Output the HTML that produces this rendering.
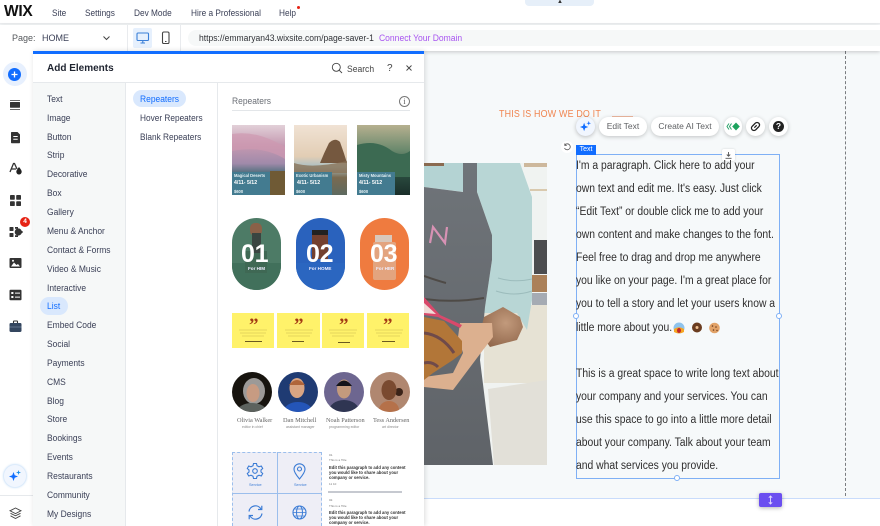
<!DOCTYPE html>
<html><head><meta charset="utf-8">
<style>
*{box-sizing:border-box}
html,body{margin:0;padding:0}
body{width:880px;height:526px;overflow:hidden;background:#fff;font-family:"Liberation Sans",sans-serif;color:#3b4057;position:relative}
#r{position:absolute;left:0;top:0;width:880px;height:526px;overflow:hidden;filter:blur(.35px)}
.a{position:absolute;white-space:nowrap}
.m{font-size:9px;color:#3b4057;top:7.5px;transform:scaleX(.92);transform-origin:0 0}
.c{left:47px;font-size:9px;color:#3b4057;transform:scaleX(.94);transform-origin:0 0}
.p{left:576px;font-size:11.5px;line-height:13px;color:#2f2e2e;transform:scaleX(.9);transform-origin:0 0}
.pill{background:#fff;border-radius:12px;height:19px;box-shadow:0 1px 4px rgba(0,0,0,.22);font-size:8.5px;color:#5f6164;text-align:center;line-height:19px;top:117px}
.t1{font-size:4.1px;font-weight:bold;color:#e6f1f4}
.t2{font-size:5.2px;font-weight:bold;color:#fff}
.num{font-size:25px;font-weight:bold;color:#fff;line-height:30px;letter-spacing:-.3px;top:239px}
.for{font-size:4.6px;font-weight:bold;color:#eef;top:265.5px}
.nm{font-family:"Liberation Serif",serif;font-size:6.3px;color:#666;top:417px}
.rl{font-size:3.5px;color:#888;top:424.5px}
.q{font-family:"Liberation Serif",serif;font-weight:bold;font-size:19px;color:#a43b14;line-height:20px;top:316px}
</style></head><body><div id="r">
<!-- canvas -->
<div class="a" style="left:0;top:0;width:880px;height:499px;background:#f6f9fa"></div>
<div class="a" style="left:0;top:498px;width:880px;height:1px;background:#c9dcfb"></div>
<div class="a" style="left:0;top:499px;width:880px;height:27px;background:#fff"></div>
<div class="a" style="left:845px;top:51px;height:445px;border-left:1px dashed #7a7d80"></div>

<!-- top bars -->
<div class="a" style="left:0;top:0;width:880px;height:24px;background:#fff;border-bottom:1px solid #eceef0"></div>
<div class="a" style="left:525px;top:0;width:69px;height:6px;background:#e6eff9;border-radius:0 0 4px 4px"></div>
<div class="a" style="left:557px;top:0;font-size:6px;color:#333;line-height:4px">▲</div>
<div class="a" style="left:4px;top:3px;font-size:15.500px;font-weight:bold;color:#111;letter-spacing:-.3px;line-height:18px">WIX</div>
<div class="a m" style="left:52px">Site</div>
<div class="a m" style="left:85px">Settings</div>
<div class="a m" style="left:134px">Dev Mode</div>
<div class="a m" style="left:191px">Hire a Professional</div>
<div class="a m" style="left:279px">Help</div>
<div class="a" style="left:297px;top:6px;width:3px;height:3px;border-radius:50%;background:#e62214"></div>

<div class="a" style="left:0;top:25px;width:880px;height:26px;background:#fff;box-shadow:0 1px 4px rgba(0,0,0,.2)"></div>
<div class="a" style="left:12px;top:33px;font-size:9px;color:#55585c">Page:</div>
<div class="a" style="left:42px;top:33px;font-size:9px;color:#3b4057">HOME</div>
<svg class="a" style="left:102px;top:35px" width="9" height="7" viewBox="0 0 9 7"><path d="M1.5 1.5L4.5 4.5L7.5 1.5" fill="none" stroke="#444" stroke-width="1"/></svg>
<div class="a" style="left:127px;top:25px;width:1px;height:26px;background:#e9ebee"></div>
<div class="a" style="left:180px;top:25px;width:1px;height:26px;background:#e9ebee"></div>
<div class="a" style="left:133px;top:28px;width:19px;height:20px;background:#e6f0fd;border-radius:2px"></div>
<svg class="a" style="left:136px;top:32px" width="14" height="12" viewBox="0 0 14 12"><rect x="1" y="1" width="11.5" height="7.5" rx="1" fill="none" stroke="#3a7fd8" stroke-width="1.1"/><path d="M6.8 8.5V11M4.5 11H9" stroke="#3a7fd8" stroke-width="1.1"/></svg>
<svg class="a" style="left:161px;top:31px" width="10" height="14" viewBox="0 0 10 14"><rect x="1.5" y="1" width="6.5" height="11.5" rx="1.3" fill="none" stroke="#444" stroke-width="1.1"/><path d="M4 10.5H5.5" stroke="#444"/></svg>
<div class="a" style="left:188px;top:30px;width:692px;height:16px;background:#f6f8f8;border-radius:8px 0 0 8px"></div>
<div class="a" style="left:199px;top:33px;font-size:9px;color:#303237;transform:scaleX(.95);transform-origin:0 0">https://emmaryan43.wixsite.com/page-saver-1</div>
<div class="a" style="left:379px;top:33px;font-size:9px;color:#a855f0;transform:scaleX(.95);transform-origin:0 0">Connect Your Domain</div>

<!-- left rail -->
<div class="a" style="left:0;top:51px;width:33px;height:475px;background:#fff"></div>
<div class="a" style="left:3px;top:62px;width:24px;height:24px;border-radius:50%;background:#e7f0fe"></div>
<div class="a" style="left:8px;top:68px;width:13px;height:13px;border-radius:50%;background:#116dff"></div>
<svg class="a" style="left:8px;top:68px" width="13" height="13"><path d="M6.5 3.5V9.5M3.5 6.5H9.5" stroke="#fff" stroke-width="1.3"/></svg>
<svg class="a" style="left:9px;top:99px" width="12" height="12" viewBox="0 0 12 12"><path d="M1 1H11V1.8H1ZM1 10H11V10.8H1Z" fill="#333"/><rect x="1" y="3" width="10" height="5.8" rx=".5" fill="#333"/></svg>
<svg class="a" style="left:10px;top:131px" width="11" height="13" viewBox="0 0 11 13"><path d="M1.5 1H7.5L10 3.5V11.5Q10 12.3 9 12.3H2Q1 12.3 1 11.5V1.8Q1 1 1.5 1Z" fill="#333"/><path d="M3.3 5.5H7.7M3.3 8.3H7.7" stroke="#fff" stroke-width="1"/></svg>
<svg class="a" style="left:9px;top:162px" width="14" height="13" viewBox="0 0 14 13"><path d="M1 10L4.5 1.5H5.5L8 7M2.5 7H7" fill="none" stroke="#333" stroke-width="1.3"/><path d="M10 5Q13 8.5 12.7 10Q12.2 12.5 10 12.5Q7.8 12.5 7.3 10Q7 8.5 10 5Z" fill="#222"/></svg>
<svg class="a" style="left:9px;top:194px" width="13" height="13" viewBox="0 0 13 13"><g fill="#333"><rect x="1" y="1" width="4.800" height="4.800" rx=".8"/><rect x="7.200" y="1" width="4.800" height="4.800" rx=".8"/><rect x="1" y="7.200" width="4.800" height="4.800" rx=".8"/><rect x="7.200" y="7.200" width="4.800" height="4.800" rx=".8"/></g></svg>
<svg class="a" style="left:9px;top:226px" width="14" height="12" viewBox="0 0 14 12"><g fill="#333"><rect x="0.5" y="1" width="4" height="4" rx=".6"/><rect x="0.5" y="7" width="4" height="4" rx=".6"/><rect x="6" y="1" width="3" height="1.8"/><rect x="6" y="9.2" width="3" height="1.8"/><circle cx="9.3" cy="6" r="3.6"/><rect x="11" y="5" width="2.6" height="2"/></g></svg>
<div class="a" style="left:20px;top:217px;width:10px;height:10px;border-radius:50%;background:#e62214;color:#fff;font-size:6.5px;font-weight:bold;text-align:center;line-height:10px">4</div>
<svg class="a" style="left:9px;top:257px" width="13" height="12" viewBox="0 0 13 12"><rect x=".5" y="1" width="12" height="10" rx="1" fill="#333"/><path d="M2 9.5L5 5.5L7.5 8L9 7L11 9.5Z" fill="#fff"/><circle cx="4" cy="3.7" r="1" fill="#fff"/></svg>
<svg class="a" style="left:9px;top:289px" width="13" height="12" viewBox="0 0 13 12"><rect x=".5" y=".8" width="12" height="10.5" rx="1" fill="#333"/><path d="M2.3 3H4.4V5H2.3ZM2.3 7H4.4V9H2.3ZM6 3.6H11V4.6H6ZM6 7.6H11V8.6H6Z" fill="#fff"/></svg>
<svg class="a" style="left:9px;top:320px" width="13" height="13" viewBox="0 0 13 13"><path d="M4.5 3V1.5Q4.5 1 5 1H8Q8.5 1 8.5 1.5V3" fill="none" stroke="#333" stroke-width="1.1"/><rect x=".5" y="3" width="12" height="9" rx="1.2" fill="#34465f"/><path d="M.5 7H12.5" stroke="#7f8fa8" stroke-width=".6"/></svg>
<div class="a" style="left:3px;top:464px;width:24px;height:24px;border-radius:50%;background:#f1f6fe;box-shadow:inset 0 0 0 1px #dcebfb,0 0 2px #d8e8f8"></div>
<svg class="a" style="left:8px;top:469px" width="14" height="14" viewBox="0 0 14 14"><path d="M5.5 3L6.7 6.3L10 7.5L6.7 8.7L5.5 12L4.3 8.7L1 7.5L4.3 6.3Z" fill="#116dff"/><path d="M10.5 1L11.1 2.9L13 3.5L11.1 4.1L10.5 6L9.9 4.1L8 3.5L9.9 2.9Z" fill="#1a8ee8"/></svg>
<div class="a" style="left:0;top:495px;width:33px;height:1px;background:#e6e9ec"></div>
<svg class="a" style="left:9px;top:507px" width="13" height="13" viewBox="0 0 13 13"><path d="M6.5 1L12 3.8L6.5 6.6L1 3.8Z M1.5 6.3L6.5 8.8L11.5 6.3 M1.5 8.8L6.5 11.5L11.5 8.8" fill="none" stroke="#444" stroke-width=".9"/></svg>

<!-- panel -->
<div class="a" style="left:33px;top:51px;width:391px;height:475px;background:#fff;box-shadow:1px 0 5px rgba(0,0,0,.14)"></div>
<div class="a" style="left:33px;top:51px;width:391px;height:3px;background:#116dff"></div>
<div class="a" style="left:33px;top:82px;width:391px;height:1px;background:#e6e9ec"></div>
<div class="a" style="left:33px;top:83px;width:93px;height:443px;background:#f6f8f8;border-right:1px solid #e6e9ec"></div>
<div class="a" style="left:217px;top:83px;width:1px;height:443px;background:#e6e9ec"></div>
<div class="a" style="left:47px;top:63px;font-size:10px;font-weight:bold;color:#1f2430">Add Elements</div>
<svg class="a" style="left:331px;top:62px" width="12" height="12" viewBox="0 0 12 12"><circle cx="5.3" cy="5.3" r="4" fill="none" stroke="#444" stroke-width=".9"/><path d="M8.2 8.2L11 11" stroke="#444" stroke-width=".9"/></svg>
<div class="a" style="left:347px;top:63.500px;font-size:9px;color:#444;transform:scaleX(.95);transform-origin:0 0">Search</div>
<div class="a" style="left:387px;top:62.500px;font-size:10px;color:#444">?</div>
<svg class="a" style="left:405px;top:64px" width="8" height="8"><path d="M1.500 1.500L6.500 6.500M6.500 1.500L1.500 6.500" stroke="#444" stroke-width=".9"/></svg>

<div class="a c" style="top:93.500px">Text</div>
<div class="a c" style="top:112.500px">Image</div>
<div class="a c" style="top:131.500px">Button</div>
<div class="a c" style="top:150px">Strip</div>
<div class="a c" style="top:169px">Decorative</div>
<div class="a c" style="top:188px">Box</div>
<div class="a c" style="top:207px">Gallery</div>
<div class="a c" style="top:226px">Menu &amp; Anchor</div>
<div class="a c" style="top:244.500px">Contact &amp; Forms</div>
<div class="a c" style="top:263.500px">Video &amp; Music</div>
<div class="a c" style="top:282.500px">Interactive</div>
<div class="a" style="left:40px;top:297px;width:28px;height:18px;border-radius:9px;background:#d9e8fd"></div>
<div class="a c" style="top:301px;color:#116dff">List</div>
<div class="a c" style="top:320px">Embed Code</div>
<div class="a c" style="top:339px">Social</div>
<div class="a c" style="top:358px">Payments</div>
<div class="a c" style="top:376.500px">CMS</div>
<div class="a c" style="top:395.500px">Blog</div>
<div class="a c" style="top:414px">Store</div>
<div class="a c" style="top:433px">Bookings</div>
<div class="a c" style="top:452px">Events</div>
<div class="a c" style="top:471px">Restaurants</div>
<div class="a c" style="top:489.500px">Community</div>
<div class="a c" style="top:509px">My Designs</div>

<div class="a" style="left:133px;top:90px;width:53px;height:17px;border-radius:9px;background:#d9e8fd"></div>
<div class="a c" style="left:140px;top:93.500px;color:#116dff">Repeaters</div>
<div class="a c" style="left:140px;top:112.500px;transform:scaleX(.92)">Hover Repeaters</div>
<div class="a c" style="left:140px;top:131.500px;transform:scaleX(.92)">Blank Repeaters</div>

<div class="a c" style="left:232px;top:96px;color:#6b6f76">Repeaters</div>
<div class="a" style="left:232px;top:110px;width:178px;height:1px;background:#e3e6e9"></div>
<div class="a" style="left:399px;top:96px;width:11px;height:11px;border-radius:50%;border:1px solid #777;font-size:8px;line-height:9px;text-align:center;color:#555;font-family:'Liberation Serif',serif">i</div>

<!-- repeater 1 -->
<svg class="a" style="left:232px;top:125px" width="178" height="71" viewBox="0 0 178 71">
<defs>
<linearGradient id="g1" x1="0" y1="0" x2="0" y2="1"><stop offset="0" stop-color="#e2d0d8"/><stop offset=".3" stop-color="#c498b0"/><stop offset=".55" stop-color="#a08aaa"/><stop offset=".68" stop-color="#54707f"/><stop offset="1" stop-color="#5f6650"/></linearGradient>
<linearGradient id="g2" x1="0" y1="0" x2="0" y2="1"><stop offset="0" stop-color="#f0e2d4"/><stop offset=".45" stop-color="#e2cdb4"/><stop offset=".6" stop-color="#a9c0c4"/><stop offset=".75" stop-color="#7a6a50"/><stop offset="1" stop-color="#5d6a60"/></linearGradient>
<linearGradient id="g3" x1="0" y1="0" x2="0" y2="1"><stop offset="0" stop-color="#b6b08f"/><stop offset=".35" stop-color="#6c8a6e"/><stop offset=".65" stop-color="#2e5243"/><stop offset="1" stop-color="#1a2e2a"/></linearGradient>
</defs>
<rect width="53" height="70" fill="url(#g1)"/><path d="M0 9Q25 5 53 22V34Q30 20 0 26Z" fill="#cf98b0" opacity=".7"/><rect x="38" y="46" width="15" height="24" fill="#6f5a35"/><rect y="47" width="38" height="23" fill="#437b90"/>
<rect x="62" width="53" height="70" fill="url(#g2)"/><path d="M88 38Q92 28 97 18Q103 12 108 17Q112 28 115 38Z" fill="#75583f"/><path d="M62 38Q80 44 115 36V48H62Z" fill="#8a7357" opacity=".8"/><rect x="62" y="47" width="38" height="23" fill="#437b90"/>
<rect x="125" width="53" height="70" fill="url(#g3)"/><path d="M125 20Q145 14 160 26Q170 32 178 26V52H125Z" fill="#3c6a52"/><rect x="125" y="47" width="38" height="23" fill="#437b90"/>
</svg>
<div class="a t1" style="left:234px;top:173px">Magical Deserts</div>
<div class="a t2" style="left:234px;top:180px">4/11- 5/12</div>
<div class="a t1" style="left:234px;top:188.500px">$600</div>
<div class="a t1" style="left:296px;top:173px">Exotic Urbanism</div>
<div class="a t2" style="left:297px;top:180px">4/11- 5/12</div>
<div class="a t1" style="left:296px;top:188.500px">$600</div>
<div class="a t1" style="left:359px;top:173px">Misty Mountains</div>
<div class="a t2" style="left:359px;top:180px">4/11- 5/12</div>
<div class="a t1" style="left:359px;top:188.500px">$600</div>

<!-- repeater 2 -->
<svg class="a" style="left:232px;top:218px" width="178" height="73" viewBox="0 0 178 73">
<defs><clipPath id="p1"><rect width="49" height="72" rx="24.500"/></clipPath><clipPath id="p2"><rect x="64" width="49" height="72" rx="24.500"/></clipPath><clipPath id="p3"><rect x="128" width="49" height="72" rx="24.500"/></clipPath></defs>
<g clip-path="url(#p1)"><rect width="49" height="72" fill="#4d7b66"/><rect y="45" width="49" height="27" fill="#41705b"/><rect x="13" y="33" width="22" height="22" fill="#3f6854"/><rect x="18" y="5" width="12" height="13" rx="5" fill="#8a6148"/><rect x="20" y="15" width="9" height="20" fill="#3a4541"/></g>
<g clip-path="url(#p2)"><rect x="64" width="49" height="72" fill="#2a62bd"/><rect x="64" y="45" width="49" height="27" fill="#2b66c0"/><rect x="80" y="12" width="16" height="5" fill="#222"/><rect x="80" y="17" width="16" height="24" fill="#73402f"/></g>
<g clip-path="url(#p3)"><rect x="128" width="49" height="72" fill="#ef7b3f"/><rect x="143" y="17" width="17" height="7" fill="#d9c8bb"/><rect x="141" y="24" width="23" height="38" rx="2" fill="#e3a47f"/></g>
</svg>
<div class="a num" style="left:241px">01</div>
<div class="a num" style="left:306px">02</div>
<div class="a num" style="left:370px">03</div>
<div class="a for" style="left:248px">For HIM</div>
<div class="a for" style="left:309px">For HOME</div>
<div class="a for" style="left:376px">For HER</div>

<!-- repeater 3 -->
<div class="a" style="left:232px;top:313px;width:42px;height:35px;background:#fff26a"></div>
<div class="a" style="left:277px;top:313px;width:43px;height:35px;background:#fff26a"></div>
<div class="a" style="left:322px;top:313px;width:42px;height:35px;background:#fff26a"></div>
<div class="a" style="left:367px;top:313px;width:42px;height:35px;background:#fff26a"></div>
<div class="a q" style="left:249px">”</div>
<div class="a q" style="left:294px">”</div>
<div class="a q" style="left:339px">”</div>
<div class="a q" style="left:383px">”</div>
<svg class="a" style="left:232px;top:328px" width="178" height="18"><g stroke="#dccb58" stroke-width=".8"><path d="M7 2H35M8 5H34M10 8H32M53 2H81M54 5H80M56 8H78M97 2H125M98 5H124M100 8H122M143 2H171M144 5H170M146 8H168"/></g><g stroke="#6a5a20" stroke-width=".9"><path d="M13 13.500H30M60 13.500H72M106 14.500H118M150 13.500H163"/></g></svg>

<!-- repeater 4 -->
<svg class="a" style="left:232px;top:372px" width="178" height="41" viewBox="0 0 178 41">
<defs><clipPath id="c1"><circle cx="20" cy="20" r="20"/></clipPath><clipPath id="c2"><circle cx="66" cy="20" r="20"/></clipPath><clipPath id="c3"><circle cx="112" cy="20" r="20"/></clipPath><clipPath id="c4"><circle cx="158" cy="20" r="20"/></clipPath></defs>
<g clip-path="url(#c1)"><rect width="40" height="40" fill="#17140f"/><ellipse cx="22" cy="19" rx="11" ry="13" fill="#9c9a98"/><ellipse cx="21" cy="21" rx="6.500" ry="9" fill="#c79b82"/><ellipse cx="20" cy="40" rx="15" ry="9" fill="#5c625e"/></g>
<g clip-path="url(#c2)"><rect x="46" width="40" height="40" fill="#1f3b73"/><ellipse cx="65" cy="16" rx="7.500" ry="10" fill="#d9a583"/><path d="M57 13Q65 3 73 13Z" fill="#b0653a"/><ellipse cx="66" cy="39" rx="14" ry="9" fill="#2455b8"/></g>
<g clip-path="url(#c3)"><rect x="92" width="40" height="40" fill="#6d6690"/><ellipse cx="112" cy="17" rx="7" ry="9.500" fill="#c39a7d"/><path d="M104 14Q112 3 120 14Z" fill="#14141a"/><ellipse cx="112" cy="39" rx="15" ry="11" fill="#2f3552"/></g>
<g clip-path="url(#c4)"><rect x="138" width="40" height="40" fill="#b08770"/><circle cx="167" cy="20" r="4" fill="#3a2318"/><ellipse cx="157" cy="18" rx="7.500" ry="10" fill="#7a4a30"/><ellipse cx="157" cy="38" rx="10" ry="9" fill="#b5714a"/></g>
</svg>
<div class="a nm" style="left:237px">Olivia Walker</div>
<div class="a nm" style="left:283px">Dan Mitchell</div>
<div class="a nm" style="left:326px">Noah Patterson</div>
<div class="a nm" style="left:373px">Tess Andersen</div>
<div class="a rl" style="left:242px">editor in chief</div>
<div class="a rl" style="left:286px">assistant manager</div>
<div class="a rl" style="left:329px">programming editor</div>
<div class="a rl" style="left:382px">art director</div>

<!-- repeater 5 -->
<div class="a" style="left:232px;top:452px;width:90px;height:74px;background:#eeeef6;border:1px dashed #9bbeec;border-bottom:0"></div>
<div class="a" style="left:277px;top:452px;width:1px;height:74px;background:#9bbeec"></div>
<div class="a" style="left:232px;top:493px;width:90px;height:1px;background:#9bbeec"></div>
<svg class="a" style="left:246px;top:462px" width="18" height="18" viewBox="0 0 18 18"><path d="M7.500 1.500H10.500L11 3.800L13 4.800L15.300 4L16.700 6.500L15 8V10L16.700 11.500L15.300 14L13 13.200L11 14.200L10.500 16.500H7.500L7 14.200L5 13.200L2.700 14L1.300 11.500L3 10V8L1.300 6.500L2.700 4L5 4.800L7 3.800Z" fill="none" stroke="#3a7bd5" stroke-width="1.100"/><circle cx="9" cy="9" r="2.300" fill="none" stroke="#3a7bd5" stroke-width="1.100"/></svg>
<svg class="a" style="left:293px;top:463px" width="13" height="17" viewBox="0 0 13 17"><path d="M6.500 16Q1 9.500 1 6.300A5.500 5.500 0 0 1 12 6.300Q12 9.500 6.500 16Z" fill="none" stroke="#3a7bd5" stroke-width="1.100"/><circle cx="6.500" cy="6" r="2" fill="none" stroke="#3a7bd5" stroke-width="1.100"/></svg>
<div class="a" style="left:249px;top:482.500px;font-size:3.800px;color:#3a7bd5">Service</div>
<div class="a" style="left:294px;top:482.500px;font-size:3.800px;color:#3a7bd5">Service</div>
<svg class="a" style="left:247px;top:504px" width="17" height="17" viewBox="0 0 17 17"><path d="M2 7.500A6.500 6.500 0 0 1 14 5M15 9.500A6.500 6.500 0 0 1 3 12" fill="none" stroke="#3a7bd5" stroke-width="1.200"/><path d="M14.800 1.800V5.500H11M2.200 15.200V11.500H6" fill="none" stroke="#3a7bd5" stroke-width="1.200"/></svg>
<svg class="a" style="left:292px;top:505px" width="15" height="15" viewBox="0 0 15 15"><circle cx="7.500" cy="7.500" r="6.500" fill="none" stroke="#3a7bd5" stroke-width="1.100"/><ellipse cx="7.500" cy="7.500" rx="3" ry="6.500" fill="none" stroke="#3a7bd5"/><path d="M1 7.500H14M2 4H13M2 11H13" stroke="#3a7bd5" stroke-width=".8"/></svg>
<div class="a" style="left:329px;top:453px;font-size:3px;color:#777">01.</div>
<div class="a" style="left:329px;top:458px;font-size:3px;color:#777">This is a Title</div>
<div class="a" style="left:329px;top:464.500px;font-size:4.200px;line-height:5.100px;color:#333;font-weight:bold">Edit this paragraph to add any content<br>you would like to share about your<br>company or service.</div>
<div class="a" style="left:329px;top:482px;font-size:3px;color:#777">11 10</div>
<div class="a" style="left:328px;top:491px;width:74px;height:1.500px;background:#c6c9d0"></div>
<div class="a" style="left:329px;top:498px;font-size:3px;color:#777">02.</div>
<div class="a" style="left:329px;top:503.500px;font-size:3px;color:#777">This is a Title</div>
<div class="a" style="left:329px;top:509.500px;font-size:4.200px;line-height:5.100px;color:#333;font-weight:bold">Edit this paragraph to add any content<br>you would like to share about your<br>company or service.</div>

<!-- baker photo -->
<svg class="a" style="left:424px;top:163px" width="123" height="302" viewBox="0 0 123 302" style="filter:blur(.5px)">
<defs>
<radialGradient id="arm" cx=".6" cy=".4" r=".7"><stop offset="0" stop-color="#c29a7c"/><stop offset="1" stop-color="#8f6549"/></radialGradient>
<linearGradient id="apr" x1="0" y1="0" x2="0" y2="1"><stop offset="0" stop-color="#6f7479"/><stop offset="1" stop-color="#5f6368"/></linearGradient>
</defs>
<rect width="123" height="302" fill="#f0f3f1"/>
<rect x="100" width="23" height="4" fill="#cdb89c"/>
<rect x="106" y="26" width="17" height="2" fill="#d9c9ae"/>
<rect x="110" y="77" width="13" height="34" fill="#4c4d4f"/>
<rect x="108" y="112" width="15" height="17" fill="#ab8159"/>
<rect x="108" y="130" width="15" height="12" fill="#a5abb3"/>
<rect x="60" y="142" width="63" height="78" fill="#e6e2d4"/>
<path d="M64 226L123 217V302H70Z" fill="#e2e0d8"/>
<path d="M0 0H40V29L0 24Z" fill="#b4d3d3"/>
<rect x="0" width="20" height="3" fill="#8a6a50"/>
<path d="M53 0H96L108 34V137L103 167L93 150H60L68 97V72L53 29Z" fill="#b8d6d5"/>
<path d="M72 128Q90 134 108 128M74 115Q90 120 108 116" fill="none" stroke="#9cbcbc" stroke-width="1"/>
<path d="M0 24L39 29V0H53V29L68 72V97L61 144L56 197L69 302H0Z" fill="url(#apr)"/>
<path d="M0 113Q14 118 22 120M0 136Q30 140 60 135" fill="none" stroke="#4e4a46" stroke-width="2"/>
<path d="M6 80L9 64L21 80L23 64" fill="none" stroke="#d792b4" stroke-width="2.200"/>
<path d="M60 154L79 144L96 154L99 164L93 177L66 184L56 170Z" fill="url(#arm)"/>
<path d="M36 160L68 160L69 174L59 187L29 227L0 224V214L29 210L39 190L34 174Z" fill="#dcb08f"/>
<path d="M0 154L20 158L38 178L38 190L29 197L9 210L0 217Z" fill="#b27638"/>
<path d="M0 170Q18 172 30 190M0 200Q8 198 14 204" fill="none" stroke="#6f4a4a" stroke-width="3"/>
<path d="M0 134L16 152L38 162L36 165L14 154L0 152Z" fill="#d9496b"/>
<path d="M0 140L12 151L0 150Z" fill="#f0dcd8"/>
</svg>

<!-- selected text -->
<div class="a" style="left:499px;top:108.500px;font-size:10px;color:#f08550;letter-spacing:.2px;line-height:12px;transform:scaleX(.89);transform-origin:0 0">THIS IS HOW WE DO IT</div>
<div class="a" style="left:612px;top:116px;width:21px;height:2px;background:#f0b9a0"></div>
<div class="a" style="left:576px;top:154px;width:204px;height:325px;border:1px solid #7fb0f5"></div>
<div class="a" style="left:576px;top:145px;width:20px;height:10px;background:#116dff;color:#fff;font-size:7px;line-height:10px;text-align:center">Text</div>
<div class="a" style="left:722px;top:149px;width:13px;height:12px;background:#fff;border-radius:2px;box-shadow:0 0 2px rgba(0,0,0,.15)"></div>
<svg class="a" style="left:724px;top:151px" width="9" height="9"><path d="M4.500 1V5M2.800 3.500L4.500 5.200L6.200 3.500M1.500 7.300H7.500" stroke="#555" fill="none" stroke-width=".9"/></svg>
<div class="a" style="left:561px;top:141px;width:12px;height:12px;border-radius:50%;background:#fff"></div>
<svg class="a" style="left:563px;top:143px" width="8" height="8" viewBox="0 0 8 8"><path d="M2 1.800A3 3 0 1 1 1.500 5M1.800 .5V2.500H3.800" fill="none" stroke="#555" stroke-width=".8"/></svg>

<div class="a" style="left:576px;top:117px;width:19px;height:19px;border-radius:50%;background:#f1f6fe;box-shadow:0 1px 4px rgba(0,0,0,.25)"></div>
<svg class="a" style="left:579px;top:120px" width="13" height="13" viewBox="0 0 14 14"><path d="M5.500 3L6.700 6.300L10 7.500L6.700 8.700L5.500 12L4.300 8.700L1 7.500L4.300 6.300Z" fill="#116dff"/><path d="M10.500 1L11.100 2.900L13 3.500L11.100 4.100L10.500 6L9.900 4.100L8 3.500L9.900 2.900Z" fill="#116dff"/></svg>
<div class="a pill" style="left:599px;width:48px">Edit Text</div>
<div class="a pill" style="left:651px;width:68px">Create AI Text</div>
<div class="a pill" style="left:724px;width:18px"></div>
<div class="a pill" style="left:746px;width:19px"></div>
<div class="a pill" style="left:769px;width:19px"></div>
<svg class="a" style="left:726px;top:121px" width="15" height="11" viewBox="0 0 15 11"><path d="M3 2.500L1 5.500L3 8.500M5.500 2.500L3.500 5.500L5.500 8.500" fill="none" stroke="#2ba36b" stroke-width="1"/><path d="M10 1.500L13.800 5.500L10 9.500L6.200 5.500Z" fill="#1da35e"/></svg>
<svg class="a" style="left:750px;top:121px" width="11" height="11" viewBox="0 0 11 11"><path d="M4.700 6.300L6.300 4.700M4 3.500L5.300 2.200A2 2 0 0 1 8.800 5.700L7.500 7M7 7.500L5.700 8.800A2 2 0 0 1 2.200 5.300L3.500 4" fill="none" stroke="#222" stroke-width="1.300" stroke-linecap="round"/></svg>
<div class="a" style="left:773px;top:121px;width:11px;height:11px;border-radius:50%;background:#222;color:#fff;font-size:8.500px;font-weight:bold;text-align:center;line-height:11px">?</div>

<div class="a p" style="top:160px">I'm a paragraph. Click here to add your</div>
<div class="a p" style="top:183px">own text and edit me. It's easy. Just click</div>
<div class="a p" style="top:206px">“Edit Text” or double click me to add your</div>
<div class="a p" style="top:229px">own content and make changes to the font.</div>
<div class="a p" style="top:252px">Feel free to drag and drop me anywhere</div>
<div class="a p" style="top:275px">you like on your page. I'm a great place for</div>
<div class="a p" style="top:298px">you to tell a story and let your users know a</div>
<div class="a p" style="top:322px">little more about you.</div>
<svg class="a" style="left:673px;top:321px" width="50" height="14" viewBox="0 0 50 14"><circle cx="6" cy="7" r="5.500" fill="#8ec3ec"/><path d="M1 8Q6 4.500 11 8V11Q6 14 1 11Z" fill="#f5a623"/><ellipse cx="6" cy="9.500" rx="2" ry="2.500" fill="#c2282c"/><circle cx="24" cy="6.500" r="5" fill="#6b3d20"/><circle cx="24" cy="6.500" r="1.500" fill="#f0c090"/><circle cx="41.500" cy="7" r="5.300" fill="#e2a368"/><g fill="#6b3d20"><circle cx="39.500" cy="5" r=".8"/><circle cx="43" cy="6" r=".8"/><circle cx="40.500" cy="9" r=".8"/><circle cx="44" cy="9.500" r=".7"/></g></svg>
<div class="a p" style="top:368px">This is a great space to write long text about</div>
<div class="a p" style="top:391px">your company and your services. You can</div>
<div class="a p" style="top:414px">use this space to go into a little more detail</div>
<div class="a p" style="top:437px">about your company. Talk about your team</div>
<div class="a p" style="top:460px">and what services you provide.</div>

<div class="a" style="left:573px;top:313px;width:6px;height:6px;border-radius:50%;background:#fff;border:1px solid #7fb0f5"></div>
<div class="a" style="left:776px;top:313px;width:6px;height:6px;border-radius:50%;background:#fff;border:1px solid #7fb0f5"></div>
<div class="a" style="left:674px;top:475px;width:6px;height:6px;border-radius:50%;background:#fff;border:1px solid #7fb0f5"></div>
<div class="a" style="left:759px;top:493px;width:23px;height:14px;border-radius:2px;background:#6b4ff0;box-shadow:0 1px 4px rgba(0,0,0,.3)"></div>
<svg class="a" style="left:767px;top:495px" width="7" height="10" viewBox="0 0 7 10"><path d="M3.500 1V9M1.800 2.700L3.500 1L5.200 2.700M1.800 7.300L3.500 9L5.200 7.300" fill="none" stroke="#e3dcff" stroke-width=".9"/></svg>
</div></body></html>
